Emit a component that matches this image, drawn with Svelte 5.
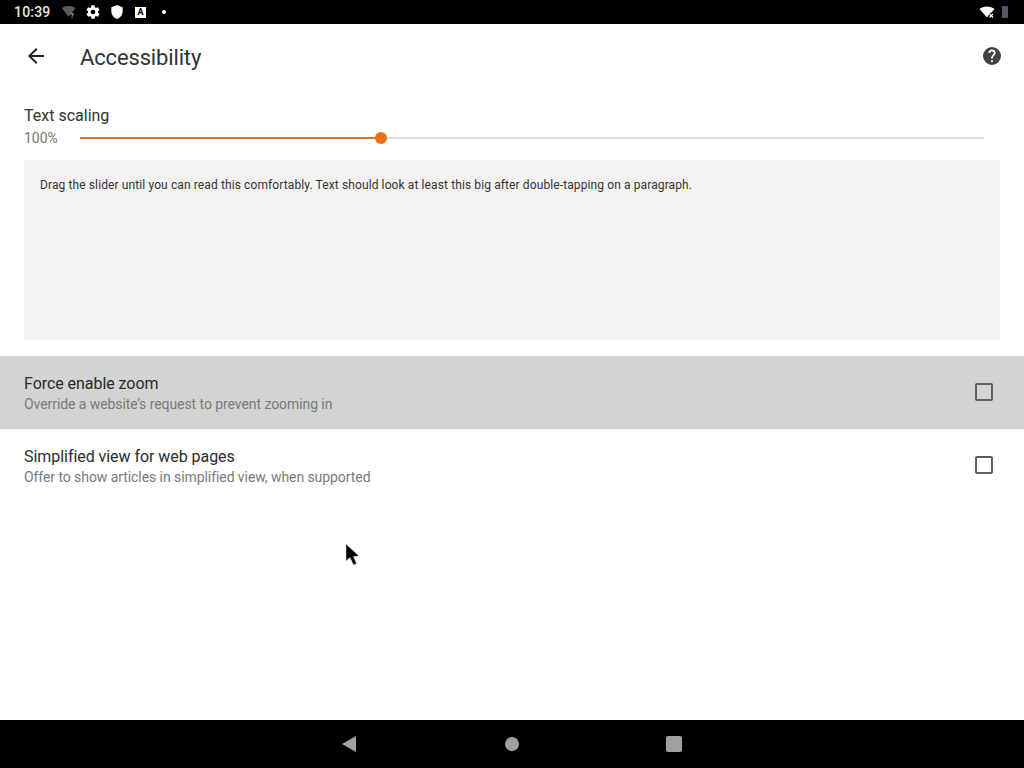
<script lang="ts">
	const rows = [
		{
			title: 'Force enable zoom',
			summary: 'Override a website’s request to prevent zooming in',
			pressed: true
		},
		{
			title: 'Simplified view for web pages',
			summary: 'Offer to show articles in simplified view, when supported',
			pressed: false
		}
	];

	let scale = 100;
	// the thumb sits 1/3 of the way along for 100%
	const sliderPercent = 33.3;
</script>

<div class="screen">
	<div class="status-bar">
		<span class="clock">10:39</span>
		<div class="status-icons">
			<svg width="16" height="14" viewBox="0 0 20 17">
				<path d="M1 3.500 C6 0 13 0 18 3.500 L12.500 11 L9.500 14.500 Z" fill="#5c5c5c" />
				<text x="12" y="16" class="mini">?</text>
			</svg>
			<svg width="16" height="16" viewBox="0 0 24 24">
				<path
					fill="#fff"
					d="M19.400 13c.04-.3.1-.65.1-1s-.05-.7-.1-1l2.100-1.650c.2-.15.25-.42.12-.64l-2-3.460c-.12-.22-.4-.3-.6-.22l-2.500 1c-.52-.4-1.080-.73-1.700-.98l-.37-2.650A.5.5 0 0 0 14 2h-4a.5.5 0 0 0-.5.42l-.37 2.650c-.6.25-1.170.6-1.700.98l-2.500-1c-.22-.1-.48 0-.6.22l-2 3.460c-.13.22-.07.5.12.64L4.600 11c-.05.32-.1.66-.1 1s.03.68.08 1l-2.100 1.650c-.2.15-.25.42-.12.64l2 3.460c.12.22.4.3.6.22l2.500-1c.52.4 1.080.73 1.700.98l.37 2.650c.04.24.25.42.5.42h4c.25 0 .46-.18.5-.42l.37-2.650c.6-.25 1.170-.6 1.700-.98l2.500 1c.22.1.48 0 .6-.22l2-3.460c.13-.22.07-.5-.12-.64zM12 15.500a3.500 3.500 0 1 1 0-7 3.500 3.500 0 0 1 0 7z"
				/>
			</svg>
			<svg width="16" height="16" viewBox="0 0 24 24">
				<path fill="#fff" d="M12 1.500 3.500 5v6c0 5.300 3.600 10 8.500 11.500 4.900-1.500 8.500-6.200 8.500-11.500V5z" />
			</svg>
			<div class="sb-badge">A</div>
			<span class="sb-dot"></span>
		</div>
		<div class="status-right">
			<svg width="16" height="16" viewBox="0 0 16 16">
				<path d="M0.500 5 C4 1.500 12 1.500 15.500 5 L10 11 L8 13.500 Z" fill="#fff" />
				<path d="M10.500 10 L14 13.500 M14 10 L10.500 13.500" stroke="#000" stroke-width="3" />
				<path d="M10.500 10 L14 13.500 M14 10 L10.500 13.500" stroke="#fff" stroke-width="1.300" />
			</svg>
			<div class="sb-battery"></div>
		</div>
	</div>

	<main class="content">
		<header class="toolbar">
			<button class="icon-btn back" aria-label="Back">
				<svg width="24" height="24" viewBox="0 0 24 24">
					<path fill="#212121" d="M20 11H7.830l5.590-5.590L12 4l-8 8 8 8 1.410-1.410L7.830 13H20z" />
				</svg>
			</button>
			<h1>Accessibility</h1>
			<button class="icon-btn help" aria-label="Help">
				<svg width="24" height="24" viewBox="0 0 24 24">
					<path
						fill="#424242"
						d="M12 3a9 9 0 1 0 0 18 9 9 0 0 0 0-18zm.9 15h-1.800v-1.800h1.800zm1.860-6.970-.8.830c-.65.650-1.060 1.190-1.060 2.540h-1.800v-.45c0-1 .41-1.900 1.060-2.550l1.110-1.130c.34-.32.530-.77.530-1.270a1.800 1.800 0 0 0-3.600 0H8.400a3.600 3.600 0 0 1 7.200 0c0 .79-.32 1.510-.84 2.030z"
					/>
				</svg>
			</button>
		</header>

		<section class="scaling">
			<div class="scaling-title">Text scaling</div>
			<div class="slider-row">
				<span class="percent">{scale}%</span>
				<div class="slider">
					<div class="slider-fill" style="width: {sliderPercent}%"></div>
					<div class="slider-thumb" style="left: {sliderPercent}%"></div>
				</div>
			</div>
			<div class="preview">
				Drag the slider until you can read this comfortably. Text should look at least this big after double-tapping on a paragraph.
			</div>
		</section>

		{#each rows as row}
			<div class="pref" class:pressed={row.pressed}>
				<div class="pref-text">
					<div class="pref-title">{row.title}</div>
					<div class="pref-summary">{row.summary}</div>
				</div>
				<span class="checkbox"></span>
			</div>
		{/each}

		<svg class="cursor" width="16" height="24" viewBox="0 0 16 24">
			<path d="M1 1 L1 18 L5 14.500 L8.500 22 L11.500 20.500 L8.500 13.500 L14 13 Z" fill="#000" stroke="#ddd" stroke-width="0.500" />
		</svg>
	</main>

	<nav class="nav-bar">
		<span class="nav-back"></span>
		<span class="nav-home"></span>
		<span class="nav-recent"></span>
	</nav>
</div>

<style>
	:global(body) {
		margin: 0;
		background: #fff;
	}

	.screen {
		width: 1024px;
		height: 768px;
		display: flex;
		flex-direction: column;
		overflow: hidden;
		font-family: Roboto, 'Liberation Sans', sans-serif;
		color: #2b2b2b;
	}

	.status-bar {
		height: 24px;
		flex: none;
		background: #000;
		color: #e8e8e8;
		display: flex;
		align-items: center;
		padding: 0 16px 0 14px;
	}

	.clock {
		font-size: 14px;
		font-weight: 500;
		letter-spacing: 0.2px;
		width: 47px;
	}

	.status-icons {
		display: flex;
		align-items: center;
		gap: 8px;
	}

	.mini {
		font: 700 8px Roboto, sans-serif;
		fill: #bbb;
	}

	.sb-badge {
		width: 11px;
		height: 11px;
		margin-left: 2px;
		background: #fff;
		color: #000;
		font-size: 9px;
		font-weight: 700;
		line-height: 11px;
		text-align: center;
	}

	.sb-dot {
		width: 4px;
		height: 4px;
		margin-left: 8px;
		border-radius: 50%;
		background: #fff;
	}

	.status-right {
		margin-left: auto;
		display: flex;
		align-items: center;
		gap: 7px;
	}

	.sb-battery {
		width: 6px;
		height: 12px;
		border-radius: 1px;
		background: #55556a;
	}

	.content {
		flex: 1;
		position: relative;
		background: #fff;
	}

	.toolbar {
		height: 64px;
		display: flex;
		align-items: center;
		padding: 0 20px 0 24px;
	}

	.icon-btn {
		width: 24px;
		height: 24px;
		padding: 0;
		border: 0;
		background: none;
		display: block;
	}

	.back {
		margin-right: 32px;
	}

	.help {
		margin-left: auto;
	}

	h1 {
		margin: 0;
		font-size: 22px;
		font-weight: 400;
		letter-spacing: -0.15px;
		color: #333;
		line-height: 1;
		padding-top: 4px;
	}

	.scaling {
		padding: 16px 24px 16px;
	}

	.scaling-title {
		font-size: 16px;
		line-height: 23px;
		color: #333;
	}

	.slider-row {
		display: flex;
		align-items: center;
		height: 20px;
		margin-top: 1px;
	}

	.percent {
		width: 56px;
		font-size: 14px;
		color: #757575;
	}

	.slider {
		position: relative;
		width: 904px;
		height: 2px;
		background: #dcdcdc;
	}

	.slider-fill {
		height: 100%;
		background: #d17a2d;
	}

	.slider-thumb {
		position: absolute;
		top: -5px;
		width: 12px;
		height: 12px;
		margin-left: -6px;
		border-radius: 50%;
		background: #e8711a;
	}

	.preview {
		margin-top: 12px;
		height: 180px;
		box-sizing: border-box;
		padding: 17px 16px;
		background: #f3f2f0;
		font-size: 12px;
		line-height: 16px;
		letter-spacing: 0.11px;
		color: #333;
	}

	.pref {
		height: 73px;
		box-sizing: border-box;
		display: flex;
		align-items: center;
		justify-content: space-between;
		padding: 0 31px 1px 24px;
	}

	.pressed {
		background: #d3d3d1;
	}

	.pref-title {
		font-size: 16px;
		line-height: 24px;
		letter-spacing: -0.05px;
	}

	.pref-summary {
		font-size: 14px;
		line-height: 16px;
		letter-spacing: -0.07px;
		color: #7a7a7a;
	}

	.checkbox {
		width: 14px;
		height: 14px;
		border: 2px solid #5f5f5f;
		border-radius: 2px;
	}

	.cursor {
		position: absolute;
		left: 345px;
		top: 519px;
	}

	.nav-bar {
		height: 48px;
		flex: none;
		background: #000;
		display: flex;
		align-items: center;
		justify-content: center;
		gap: 147px;
	}

	.nav-back {
		width: 0;
		height: 0;
		border-style: solid;
		border-width: 8px 14px 8px 0;
		border-color: transparent #a0a0a0 transparent transparent;
	}

	.nav-home {
		width: 14px;
		height: 14px;
		margin-left: 2px;
		border-radius: 50%;
		background: #a0a0a0;
	}

	.nav-recent {
		width: 16px;
		height: 16px;
		border-radius: 2px;
		background: #a0a0a0;
	}
</style>
